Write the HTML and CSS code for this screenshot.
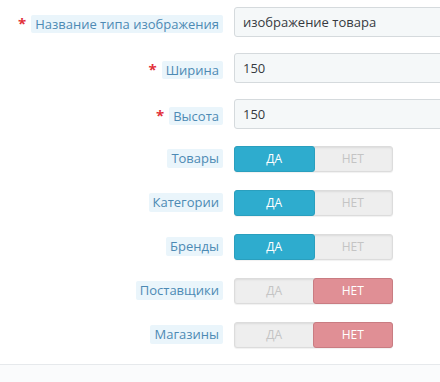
FILE: index.html
```html
<!DOCTYPE html>
<html lang="ru">
<head>
    <meta charset="UTF-8">
    <title>Тип изображения</title>
    <link rel="stylesheet" href="styles.css">
</head>
<body>
    <div class="panel">
        <div class="form">
            <div class="row">
                <div class="label-col"><span class="req">*</span><span class="label">Название типа изображения</span></div>
                <div class="ctrl"><input class="input" type="text" value="изображение товара"></div>
            </div>
            <div class="row">
                <div class="label-col"><span class="req">*</span><span class="label">Ширина</span></div>
                <div class="ctrl"><input class="input" type="text" value="150"></div>
            </div>
            <div class="row">
                <div class="label-col"><span class="req">*</span><span class="label">Высота</span></div>
                <div class="ctrl"><input class="input" type="text" value="150"></div>
            </div>

            <div class="row row-switch">
                <div class="label-col"><span class="label">Товары</span></div>
                <div class="ctrl">
                    <div class="switch"><span class="opt yes on">ДА</span><span class="opt no">НЕТ</span></div>
                </div>
            </div>
            <div class="row row-switch">
                <div class="label-col"><span class="label">Категории</span></div>
                <div class="ctrl">
                    <div class="switch"><span class="opt yes on">ДА</span><span class="opt no">НЕТ</span></div>
                </div>
            </div>
            <div class="row row-switch">
                <div class="label-col"><span class="label">Бренды</span></div>
                <div class="ctrl">
                    <div class="switch"><span class="opt yes on">ДА</span><span class="opt no">НЕТ</span></div>
                </div>
            </div>
            <div class="row row-switch">
                <div class="label-col"><span class="label">Поставщики</span></div>
                <div class="ctrl">
                    <div class="switch"><span class="opt yes">ДА</span><span class="opt no on">НЕТ</span></div>
                </div>
            </div>
            <div class="row row-switch">
                <div class="label-col"><span class="label">Магазины</span></div>
                <div class="ctrl">
                    <div class="switch"><span class="opt yes">ДА</span><span class="opt no on">НЕТ</span></div>
                </div>
            </div>
        </div>
        <div class="footer"></div>
    </div>
</body>
</html>
```

FILE: styles.css
```css
* {
    margin: 0;
    padding: 0;
    box-sizing: border-box;
}
html, body {
    overflow: hidden;
}
body {
    background: #ffffff;
    font-family: "Open Sans", "Liberation Sans", sans-serif;
    font-size: 13px;
    color: #363a41;
}
.panel {
    width: 440px;
    overflow: hidden;
}
.form {
    display: flex;
    flex-direction: column;
    padding: 7px 0 15px;
}
.row {
    display: flex;
    margin-bottom: 16px;
}
.row:last-child {
    margin-bottom: 0;
}
.label-col {
    width: 223px;
    flex: none;
    display: flex;
    justify-content: flex-end;
    align-items: flex-start;
    padding-top: 8px;
}
.row-switch {
    height: 28px;
}
.row-switch .label-col {
    padding-top: 4px;
}
.req {
    color: #e2303a;
    font-size: 15px;
    font-weight: bold;
    line-height: 16px;
    margin-right: 5px;
}
.label {
    background: #eaf5fb;
    color: #4d8ab4;
    line-height: 18px;
    padding: 0 4px;
    border-radius: 2px;
    white-space: nowrap;
}
.row-switch .label {
    line-height: 19px;
}
.ctrl {
    flex: none;
    width: 240px;
    margin-left: 11px;
}
.input {
    display: block;
    width: 100%;
    height: 30px;
    padding: 0 8px;
    background: #f5f8f9;
    border: 1px solid #d5dadd;
    border-radius: 3px;
    font-family: inherit;
    font-size: 13px;
    color: #363a41;
}
.switch {
    display: flex;
    width: 159px;
    height: 26px;
    margin-top: 1px;
    background: #eeeeee;
    border: 1px solid #dcdcdc;
    border-radius: 3px;
    box-shadow: inset 0 1px 2px rgba(0, 0, 0, .08), 0 1px 1px rgba(0, 0, 0, .06);
}
.opt {
    flex: 1;
    text-align: center;
    line-height: 24px;
    font-size: 12px;
    color: #c4c4c4;
}
.opt.on {
    color: #ffffff;
    border-radius: 3px;
    margin: -1px;
}
.yes.on {
    background: #2eacce;
    border: 1px solid #2a9fbe;
}
.no.on {
    background: #e08f95;
    border: 1px solid #c97c82;
}
.footer {
    height: 20px;
    border-top: 1px solid #e6e9ec;
    background: #fafbfc;
}
```
